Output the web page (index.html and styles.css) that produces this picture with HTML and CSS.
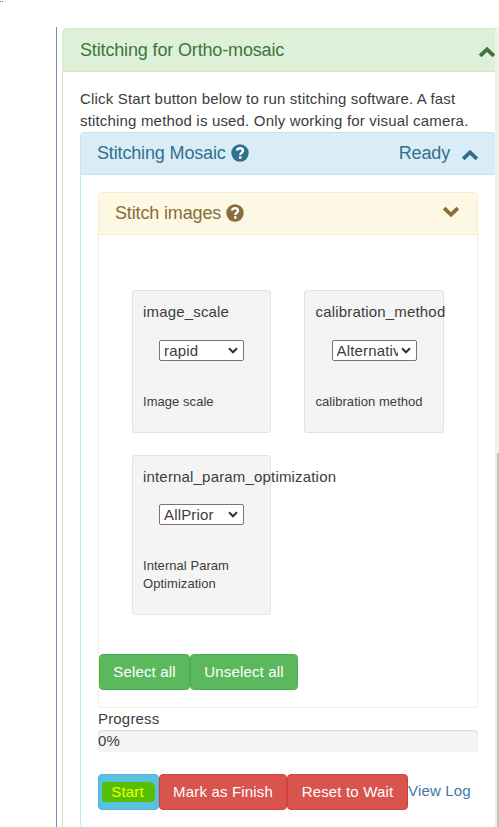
FILE: index.html
```html
<!DOCTYPE html>
<html lang="en">
<head>
<meta charset="utf-8">
<title>Stitching for Ortho-mosaic</title>
<link rel="stylesheet" href="styles.css">
</head>
<body>
<svg class="specks" width="4" height="4" viewBox="0 0 4 4"><path d="M0 1h1v1H0zM2 1h1v1H2z" fill="#d9405a"/></svg>
<div class="pane">
  <main class="content">
    <section class="panel panel-success">
      <header class="panel-heading">
        <h4>Stitching for Ortho-mosaic</h4>
        <svg class="chevron" viewBox="0 0 16 11"><path d="M1.700 9 8 3l6.300 6"/></svg>
      </header>
      <div class="panel-body">
        <p class="intro">Click Start button below to run stitching software. A fast<br>stitching method is used. Only working for visual camera.</p>
        <section class="panel panel-info">
          <header class="panel-heading">
            <h4>Stitching Mosaic</h4>
            <svg class="help" viewBox="0 0 18 18"><circle cx="9" cy="9" r="8.700"/><path d="M6 6.700C6.300 3.400 12 3.300 12 6.700c0 2-2.700 1.900-2.700 4.300"/><path class="dot" d="M8 12.300h2.600v2.400H8z"/></svg>
            <span class="status">Ready</span>
            <svg class="chevron" viewBox="0 0 16 11"><path d="M1.700 9 8 3l6.300 6"/></svg>
          </header>
          <div class="panel-body">
            <section class="panel panel-warning">
              <header class="panel-heading">
                <h4>Stitch images</h4>
                <svg class="help" viewBox="0 0 18 18"><circle cx="9" cy="9" r="8.700"/><path d="M6 6.700C6.300 3.400 12 3.300 12 6.700c0 2-2.700 1.900-2.700 4.300"/><path class="dot" d="M8 12.300h2.600v2.400H8z"/></svg>
                <svg class="chevron" viewBox="0 0 16 11"><path d="M1.700 2 8 8l6.300-6"/></svg>
              </header>
              <div class="wells">
                <div class="well">
                  <label>image_scale</label>
                  <div class="select"><span>rapid</span><svg viewBox="0 0 10 7"><path d="m1 1.300 4 4 4-4"/></svg></div>
                  <p>Image scale</p>
                </div>
                <div class="well well-right">
                  <label>calibration_method</label>
                  <div class="select"><span>Alternative</span><svg viewBox="0 0 10 7"><path d="m1 1.300 4 4 4-4"/></svg></div>
                  <p>calibration method</p>
                </div>
                <div class="well well-tall">
                  <label>internal_param_optimization</label>
                  <div class="select"><span>AllPrior</span><svg viewBox="0 0 10 7"><path d="m1 1.300 4 4 4-4"/></svg></div>
                  <p>Internal Param<br>Optimization</p>
                </div>
              </div>
              <div class="buttons">
                <button class="btn btn-success select-all">Select all</button>
                <button class="btn btn-success unselect-all">Unselect all</button>
              </div>
            </section>
            <div class="progress-label">Progress</div>
            <div class="progress">0%</div>
            <div class="buttons actions">
              <button class="btn btn-info start"><span class="marker">Start</span></button>
              <button class="btn btn-danger finish">Mark as Finish</button>
              <button class="btn btn-danger reset">Reset to Wait</button>
              <a class="log">View Log</a>
            </div>
          </div>
        </section>
      </div>
    </section>
  </main>
  <div class="scrollbar"><div class="thumb"></div></div>
</div>
</body>
</html>
```
FILE: styles.css
```css
* { box-sizing: border-box; }
body {
  margin: 0;
  height: 827px;
  overflow: hidden;
  background: #fff;
  color: #3c3c3c;
  font: 15px/22px "Liberation Sans", Arial, sans-serif;
  letter-spacing: .175px;
}
.specks { display: block; width: 4px; height: 4px; }
.pane {
  display: flex;
  height: 800px;
  margin: 23px 0 0 56px;
  border-left: 1px solid #7d8cab;
}
.content { width: 438px; padding: 1px 0 0 5px; overflow: hidden; flex: none; }
.scrollbar { flex: 1; background: #f0f0f0; }
.thumb { height: 374px; margin: 426px 0 0 2px; background: #c1c1c1; }
.panel { border: 1px solid; border-radius: 4px; background: #fff; }
.panel-heading {
  display: flex;
  align-items: center;
  height: 42px;
  padding: 0 17px 0 16px;
  border-bottom: 1px solid;
  border-color: inherit;
}
h4 {
  margin: 0;
  font-size: 18px;
  font-weight: 400;
  line-height: 22px;
  letter-spacing: -.15px;
  white-space: nowrap;
}
.panel-body { padding: 17px; }
.panel-success { width: 460px; height: 850px; border-color: #d6e9c6; }
.panel-success > .panel-heading { height: 43px; padding: 0 0 0 17px; background: #dff0d8; color: #3c763d; }
.panel-success > .panel-heading .chevron { margin: 3px 0 0 194px; }
.panel-info { width: 416px; height: 696px; border-color: #bce8f1; }
.panel-info > .panel-heading { background: #d9edf7; color: #31708f; }
.panel-info > .panel-heading h4, .panel-warning > .panel-heading h4, .status { margin-bottom: 2px; }
.panel-warning { width: 380px; height: 516px; border-color: #faebcc; }
.panel-warning > .panel-heading { background: #fcf8e3; color: #8a6d3b; }
.panel-warning > .panel-heading .chevron { margin-bottom: 3px; }
.chevron { width: 18px; height: 12px; margin-left: auto; fill: none; stroke: currentColor; stroke-width: 3.500; flex: none; }
.panel-info > .panel-heading > .chevron { margin: 2px -1px 0 11px; }
.status { margin-left: auto; font-size: 18px; letter-spacing: -.15px; }
.help { width: 18px; height: 18px; margin: 0 0 2px 5px; fill: currentColor; }
.help path { fill: none; stroke: #fff; stroke-width: 2.400; }
.help .dot { fill: #fff; stroke: none; }
.panel-success > .panel-body { padding: 16px 17px; }
.intro { margin: 0; white-space: nowrap; height: 44px; }
.wells {
  display: grid;
  grid-template-columns: 139px 140px;
  grid-template-rows: 143px 160px;
  gap: 22px 33px;
  padding: 55px 33px 0;
}
.well {
  padding: 11px 10px 0;
  border: 1px solid #e3e3e3;
  border-radius: 3px;
  background: #f4f4f4;
  white-space: nowrap;
}
.well-right { padding-left: 10.500px; }
label { display: block; height: 38px; line-height: 20px; }
.select {
  display: flex;
  align-items: center;
  width: 85px;
  height: 21px;
  margin-left: 16px;
  padding: 0 5px 0 4px;
  border: 1px solid #767676;
  border-radius: 2px;
  background: #fff;
}
.select span { width: 61px; overflow: hidden; }
.select svg { width: 10px; height: 7px; margin-left: 3px; fill: none; stroke: #333; stroke-width: 2; }
.well p { margin: 32px 0 0; font-size: 13px; line-height: 18px; letter-spacing: .05px; }
.well-tall label { height: 37px; }
.buttons { display: flex; }
.panel-warning .buttons { margin-top: 39px; }
.btn {
  height: 36px;
  padding: 0;
  border: 1px solid;
  border-radius: 4px;
  color: #fff;
  font: 15px/22px "Liberation Sans", Arial, sans-serif;
  letter-spacing: .17px;
  white-space: nowrap;
}
.btn-success { background: #5cb85c; border-color: #4cae4c; }
.btn-info { background: #5bc0de; border-color: #46b8da; }
.btn-danger { background: #d9534f; border-color: #d43f3a; }
.select-all { width: 91px; }
.unselect-all { width: 108px; }
.start { width: 61px; }
.finish { width: 128px; }
.reset { width: 121px; }
.marker { display: block; width: 53px; height: 20px; margin: 0 auto; border-radius: 2px 6px 4px 2px; background: #55bf08; color: #f4ff00; line-height: 20px; padding-right: 2px; }
.progress-label { height: 22px; line-height: 22px; }
.progress {
  height: 22px;
  border-radius: 4px;
  background: #f4f4f4;
  box-shadow: inset 0 1px 2px rgba(0, 0, 0, .12);
}
.actions { margin-top: 22px; }
.log { margin-top: 6px; color: #4078ad; white-space: nowrap; }
```
